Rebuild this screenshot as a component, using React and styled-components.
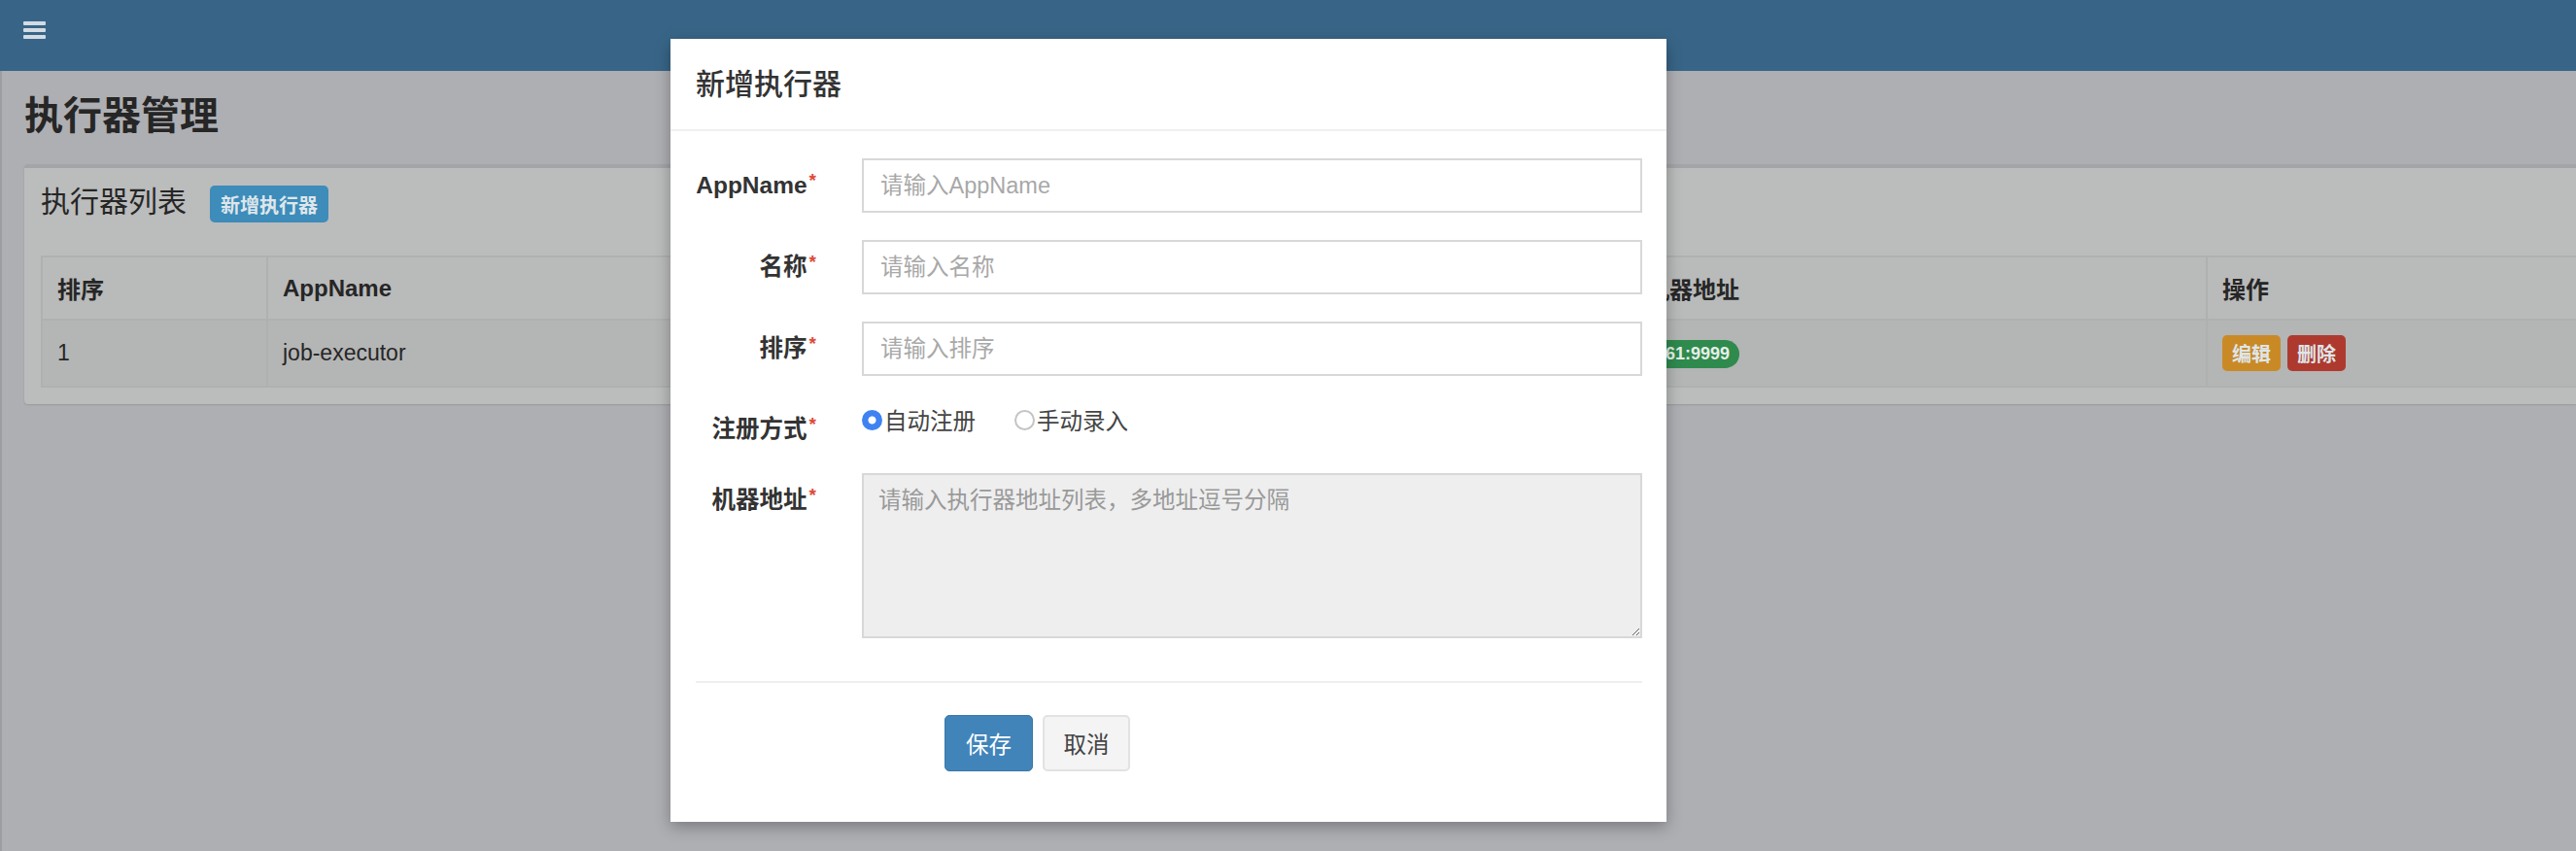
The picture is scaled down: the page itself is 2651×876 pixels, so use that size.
import React from "react";
import styled, { createGlobalStyle } from "styled-components";

const GlobalStyle = createGlobalStyle`
  html, body {
    margin: 0;
    padding: 0;
  }
  body {
    font-family: "Liberation Sans", "Noto Sans CJK SC", sans-serif;
    background: #aeafb3;
    overflow: hidden;
  }
  * {
    box-sizing: border-box;
  }
`;

const Page = styled.div`
  position: relative;
  width: 2651px;
  height: 876px;
  overflow: hidden;
  background: #aeafb3;
`;

const TopBar = styled.header`
  height: 73px;
  background: #386587;
  padding: 22px 0 0 24px;
`;

const MenuToggle = styled.div`
  width: 23px;
  display: flex;
  flex-direction: column;
  gap: 3px;

  span {
    height: 4px;
    border-radius: 1px;
    background: #d3dbe3;
  }
`;

const Content = styled.main`
  height: 803px;
  border-left: 2px solid #9c9da1;
  padding: 24px 0 0 23px;
`;

const PageTitle = styled.h1`
  margin: 0 0 28px;
  font-size: 40px;
  line-height: 44px;
  font-weight: 700;
  color: #262626;
`;

const Box = styled.section`
  background: #bbbcbc;
  border-top: 4px solid #a3a5a8;
  border-radius: 4px 0 0 4px;
  padding: 14px 0 17px 17px;
  box-shadow: 0 1px 2px rgba(0, 0, 0, 0.12);
`;

const BoxHeader = styled.div`
  display: flex;
  align-items: center;
  gap: 24px;
  margin-bottom: 34px;
`;

const BoxTitle = styled.h3`
  margin: 0;
  font-size: 30px;
  line-height: 36px;
  font-weight: 400;
  color: #262626;
`;

const SmallButton = styled.button`
  height: ${(p) => p.$h || 37}px;
  padding: 0 ${(p) => p.$px || 10}px;
  border: 0;
  border-radius: 5px;
  margin-top: ${(p) => p.$mt || 0}px;
  background: ${(p) => p.$bg};
  color: #dfe6ea;
  font-family: inherit;
  font-size: 20px;
  font-weight: 700;
`;

const Table = styled.table`
  width: 2609px;
  border-collapse: collapse;
  table-layout: fixed;
  border: 2px solid #afb0b0;
  border-right: 0;
`;

const Th = styled.th`
  height: 65px;
  padding: 0 15px;
  text-align: left;
  font-size: 24px;
  font-weight: 700;
  color: #262626;
  background: #b9baba;
  border: 2px solid #afb0b0;
`;

const Td = styled.td`
  height: 69px;
  padding: 0 15px;
  font-size: 23px;
  color: #262626;
  background: #b4b5b5;
  border: 2px solid #afb0b0;
  white-space: nowrap;
  overflow: hidden;
`;

const Badge = styled.span`
  display: inline-block;
  padding: 4px 10px;
  border-radius: 16px;
  background: #2f8a4d;
  color: #e5efe8;
  font-size: 18px;
  font-weight: 700;
`;

const Actions = styled.div`
  display: flex;
  gap: 7px;
`;

const Modal = styled.div`
  position: absolute;
  left: 690px;
  top: 40px;
  width: 1025px;
  background: #fff;
  box-shadow: 0 5px 15px rgba(0, 0, 0, 0.3);
  font-family: "Liberation Sans", "Noto Sans CJK SC", sans-serif;
`;

const ModalHeader = styled.div`
  padding: 25px 26px;
  border-bottom: 2px solid #f0f0f0;
`;

const ModalTitle = styled.h4`
  margin: 0;
  font-size: 30px;
  line-height: 43px;
  font-weight: 500;
  color: #333;
`;

const ModalBody = styled.div`
  padding: 28px 25px 52px 26px;
`;

const Form = styled.form`
  display: flex;
  flex-direction: column;
  gap: 28px;
`;

const FormRow = styled.div`
  display: grid;
  grid-template-columns: 124px 1fr;
  column-gap: 47px;
  align-items: start;
`;

const Label = styled.label`
  padding-top: ${(p) => p.$pt ?? 11}px;
  text-align: right;
  font-size: 24.5px;
  line-height: 34px;
  font-weight: 700;
  color: #333;
  white-space: nowrap;
`;

const Required = styled.span`
  display: inline-block;
  margin-left: 2px;
  color: #dd4b39;
  font-size: 19px;
  line-height: 1;
  vertical-align: 7px;
`;

const TextInput = styled.input`
  width: 100%;
  height: 56px;
  padding: 0 17px;
  border: 2px solid #d8d8d8;
  border-radius: 0;
  font-family: inherit;
  font-size: 23.5px;
  color: #333;
  outline: none;

  &::placeholder {
    color: #a8a8a8;
  }
`;

const RadioGroup = styled.div`
  display: flex;
  align-items: center;
  gap: 40px;
  height: 34px;
`;

const RadioOption = styled.label`
  display: flex;
  align-items: center;
  gap: 2px;
  font-size: 23.5px;
  color: #444;
`;

const RadioDot = styled.span`
  width: 21px;
  height: 21px;
  border-radius: 50%;
  background: ${(p) =>
    p.$checked
      ? "radial-gradient(circle, #fff 0 3.5px, #3f82f1 4.5px)"
      : "#fff"};
  border: ${(p) => (p.$checked ? "0" : "2px solid #c4c4c4")};
`;

const TextArea = styled.textarea`
  width: 100%;
  height: 170px;
  padding: 9px 15px;
  border: 2px solid #d8d8d8;
  border-radius: 0;
  background: #eeeeee;
  font-family: inherit;
  font-size: 23.5px;
  line-height: 34px;
  outline: none;

  &::placeholder {
    color: #999;
  }
`;

const Divider = styled.hr`
  margin: 44px 0 33px;
  border: 0;
  border-top: 2px solid #eeeeee;
`;

const ButtonRow = styled.div`
  display: flex;
  gap: 10px;
  padding-left: 256px;
`;

const ModalButton = styled.button`
  width: ${(p) => (p.$primary ? 91 : 90)}px;
  height: 58px;
  border-radius: 5px;
  border: ${(p) => (p.$primary ? "1px solid #3a78aa" : "2px solid #e2e2e2")};
  background: ${(p) => (p.$primary ? "#4184ba" : "#f4f4f4")};
  color: ${(p) => (p.$primary ? "#fff" : "#444")};
  font-family: inherit;
  font-size: 23.5px;
`;

const columns = [
  { title: "排序", width: 232 },
  { title: "AppName", width: 475 },
  { title: "名称", width: 470 },
  { title: "注册方式", width: 458 },
  { title: "机器地址", width: 593 },
  { title: "操作", width: 381 },
];

const fields = [
  { label: "AppName", placeholder: "请输入AppName" },
  { label: "名称", placeholder: "请输入名称" },
  { label: "排序", placeholder: "请输入排序" },
];

const App = () => {
  return (
    <Page>
      <GlobalStyle />
      <TopBar>
        <MenuToggle>
          <span />
          <span />
          <span />
        </MenuToggle>
      </TopBar>

      <Content>
        <PageTitle>执行器管理</PageTitle>
        <Box>
          <BoxHeader>
            <BoxTitle>执行器列表</BoxTitle>
            <SmallButton $bg="#3d8cba" $h={38} $mt={4} $px={11}>
              新增执行器
            </SmallButton>
          </BoxHeader>

          <Table>
            <colgroup>
              {columns.map((c) => (
                <col key={c.title} style={{ width: c.width }} />
              ))}
            </colgroup>
            <thead>
              <tr>
                {columns.map((c) => (
                  <Th key={c.title}>{c.title}</Th>
                ))}
              </tr>
            </thead>
            <tbody>
              <tr>
                <Td>1</Td>
                <Td>job-executor</Td>
                <Td>示例执行器</Td>
                <Td>自动注册</Td>
                <Td>
                  <Badge>161:9999</Badge>
                </Td>
                <Td>
                  <Actions>
                    <SmallButton $bg="#c98a26">编辑</SmallButton>
                    <SmallButton $bg="#ae3a2f">删除</SmallButton>
                  </Actions>
                </Td>
              </tr>
            </tbody>
          </Table>
        </Box>
      </Content>

      <Modal>
        <ModalHeader>
          <ModalTitle>新增执行器</ModalTitle>
        </ModalHeader>
        <ModalBody>
          <Form>
            {fields.map((f) => (
              <FormRow key={f.label}>
                <Label>
                  {f.label}
                  <Required>*</Required>
                </Label>
                <TextInput placeholder={f.placeholder} />
              </FormRow>
            ))}

            <FormRow>
              <Label $pt={10}>
                注册方式<Required>*</Required>
              </Label>
              <RadioGroup>
                <RadioOption>
                  <RadioDot $checked />
                  自动注册
                </RadioOption>
                <RadioOption>
                  <RadioDot />
                  手动录入
                </RadioOption>
              </RadioGroup>
            </FormRow>

            <FormRow>
              <Label>
                机器地址<Required>*</Required>
              </Label>
              <TextArea
                readOnly
                placeholder="请输入执行器地址列表，多地址逗号分隔"
              />
            </FormRow>
          </Form>

          <Divider />

          <ButtonRow>
            <ModalButton $primary>保存</ModalButton>
            <ModalButton>取消</ModalButton>
          </ButtonRow>
        </ModalBody>
      </Modal>
    </Page>
  );
};

export default App;
